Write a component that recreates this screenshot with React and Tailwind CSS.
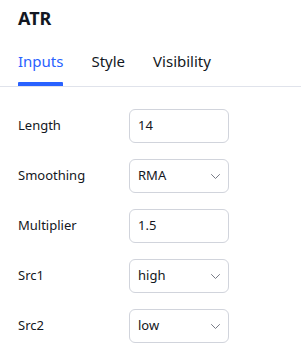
import React from "react";

const Chevron = () => (
  <svg width="9" height="5" viewBox="0 0 9 5" fill="none" className="text-[#787b86]">
    <path d="M0.5 0.5l4 4 4-4" stroke="currentColor" strokeWidth="1" strokeLinecap="round" strokeLinejoin="round" />
  </svg>
);

function Row({ label, value, select }) {
  return (
    <div className="flex items-center h-[34px]">
      <div className="w-[111px] text-[13px] text-[#131722]">{label}</div>
      <div className="w-[100px] h-[34px] border border-[#d1d4dc] rounded-[6px] flex items-center justify-between pl-[8px] pr-[8px] text-[13px] text-[#131722]">
        <span>{value}</span>
        {select && <Chevron />}
      </div>
    </div>
  );
}

export default function App() {
  return (
    <div className="w-[301px] h-[351px] bg-white overflow-hidden" style={{ fontFamily: '"Noto Sans", sans-serif' }}>
      <div className="px-[18px] pt-[5px] h-[40px] text-[18px] font-bold text-[#131722] leading-[26px]">ATR</div>
      <div className="flex gap-[28px] px-[18px] border-b border-[#e0e3eb] h-[47px]">
        <div className="flex flex-col justify-between">
          <div className="text-[15px] text-[#2962ff] leading-[22px] pt-[10px]">Inputs</div>
          <div className="h-[4px] bg-[#2962ff] rounded-t-[1px]"></div>
        </div>
        <div className="text-[15px] text-[#131722] leading-[22px] pt-[10px]">Style</div>
        <div className="text-[15px] text-[#131722] leading-[22px] pt-[10px]">Visibility</div>
      </div>
      <div className="px-[18px] pt-[22px] flex flex-col gap-[16px]">
        <Row label="Length" value="14" />
        <Row label="Smoothing" value="RMA" select />
        <Row label="Multiplier" value="1.5" />
        <Row label="Src1" value="high" select />
        <Row label="Src2" value="low" select />
      </div>
    </div>
  );
}
